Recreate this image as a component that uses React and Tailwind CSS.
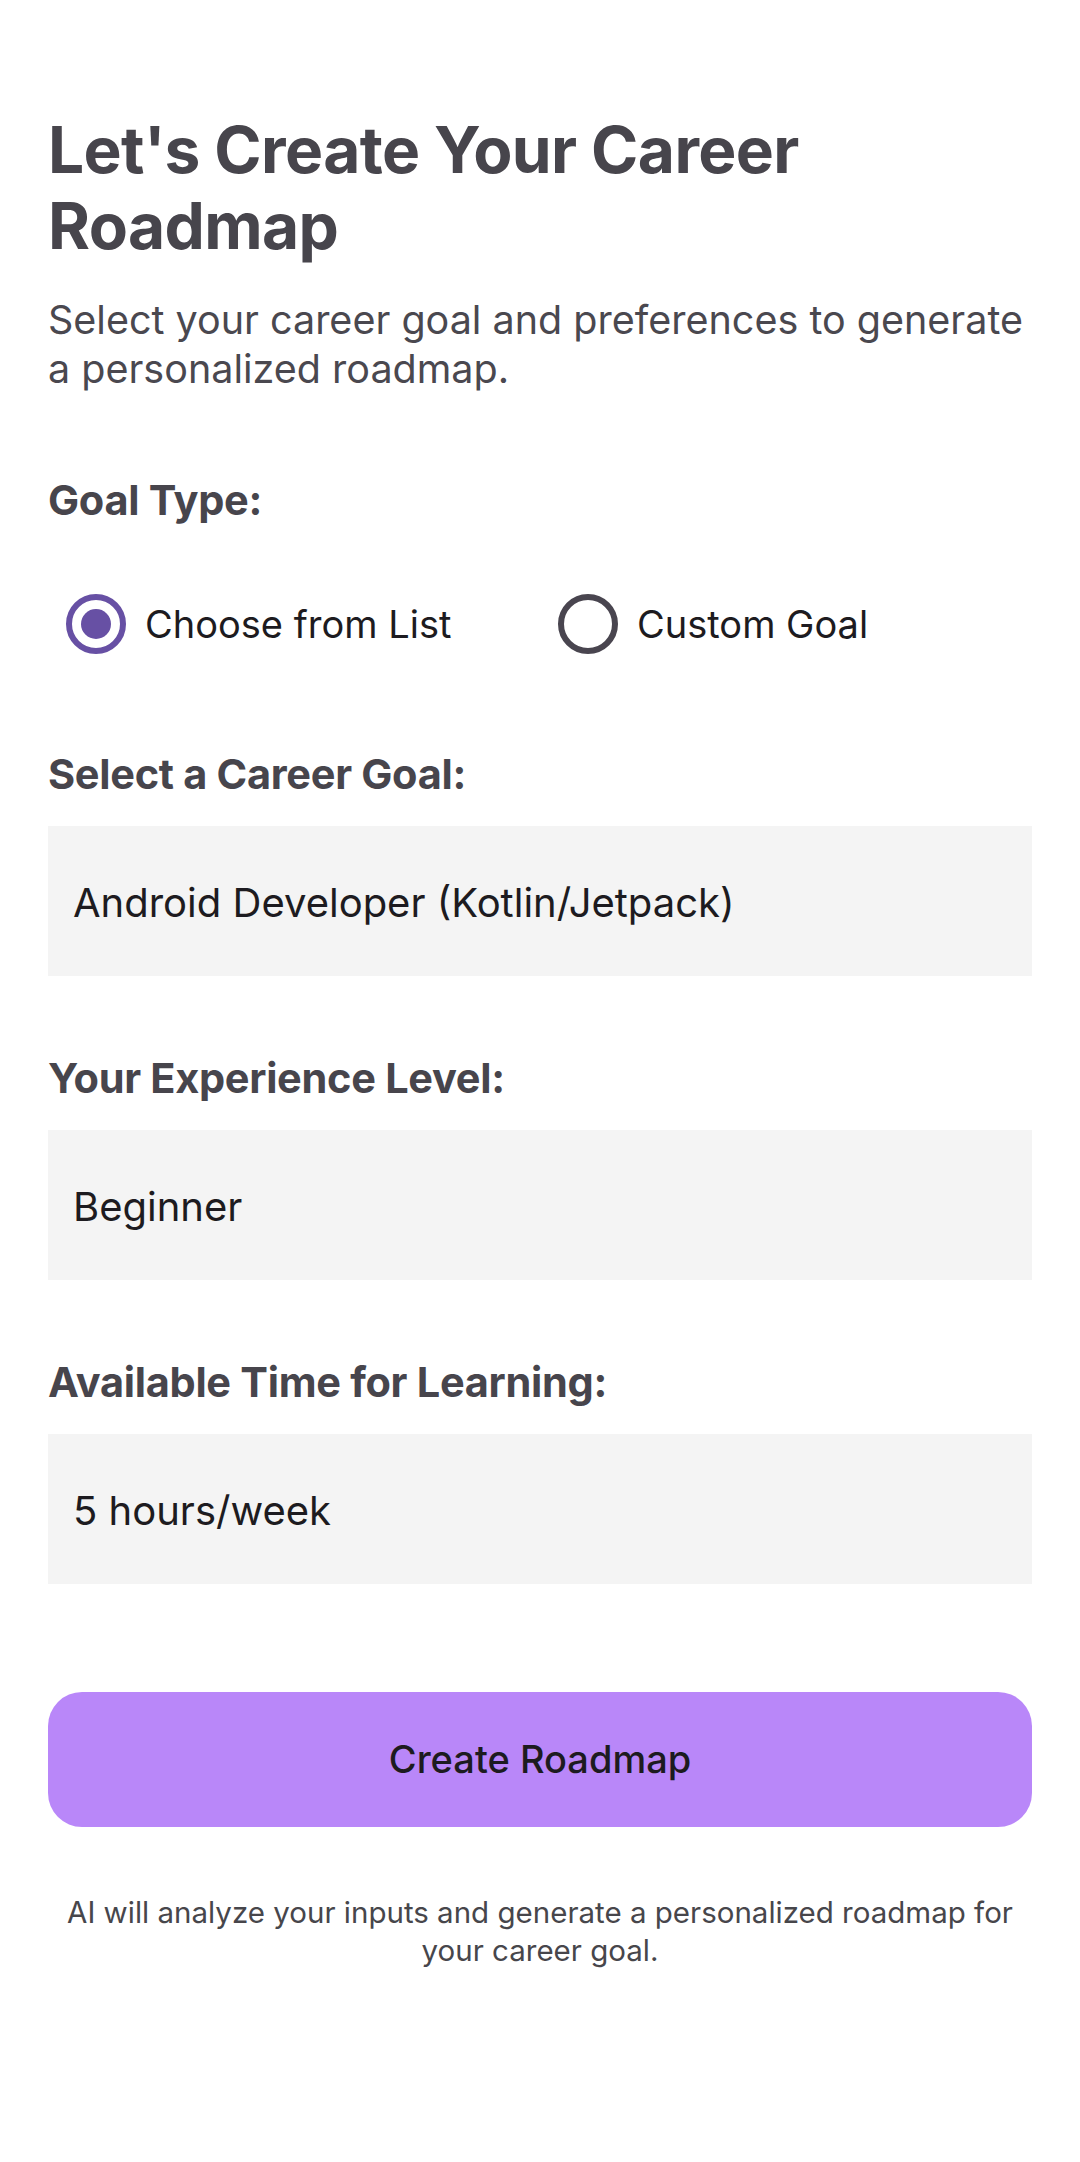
import React, { useState } from 'react';

const fields = [
  { label: 'Select a Career Goal:', value: 'Android Developer (Kotlin/Jetpack)' },
  { label: 'Your Experience Level:', value: 'Beginner' },
  { label: 'Available Time for Learning:', value: '5 hours/week' },
];

function Radio({ checked, label, onClick }) {
  return (
    <button onClick={onClick} className="flex-1 flex items-center gap-[19px] pl-[18px] text-left">
      <span
        className={`w-[60px] h-[60px] rounded-full border-[6px] flex items-center justify-center shrink-0 ${checked ? 'border-[#6750a4]' : 'border-[#49454f]'}`}
      >
        {checked && <span className="w-[30px] h-[30px] rounded-full bg-[#6750a4]" />}
      </span>
      <span className="text-[38px] leading-[48px] text-[#1d1b20]">{label}</span>
    </button>
  );
}

export default function App() {
  const [goalType, setGoalType] = useState('list');

  return (
    <div className="min-h-[2162px] bg-white px-[48px] pt-[112px] font-['Inter','Liberation_Sans',sans-serif]">
      {/* Header */}
      <h1 className="text-[64px] leading-[76px] font-bold text-[#47454c] tracking-[-0.6px]">
        Let's Create Your Career Roadmap
      </h1>
      <p className="mt-[32px] text-[39.5px] leading-[49px] text-[#4a484f]">
        Select your career goal and preferences to generate a personalized roadmap.
      </p>

      {/* Goal type */}
      <h2 className="mt-[82px] text-[41.5px] leading-[48px] font-bold text-[#47454c] tracking-[-0.3px]">Goal Type:</h2>
      <div className="mt-[70px] flex">
        <Radio checked={goalType === 'list'} label="Choose from List" onClick={() => setGoalType('list')} />
        <Radio checked={goalType === 'custom'} label="Custom Goal" onClick={() => setGoalType('custom')} />
      </div>

      {/* Fields */}
      <div className="mt-[96px] flex flex-col gap-[78px]">
        {fields.map(f => (
          <div key={f.label}>
            <h2 className="text-[41.5px] leading-[48px] font-bold text-[#47454c] tracking-[-0.3px]">{f.label}</h2>
            <div className="mt-[28px] h-[150px] bg-[#f4f4f4] flex items-center px-[25px]">
              <span className="text-[40px] text-[#1d1b20] translate-y-[2px]">{f.value}</span>
            </div>
          </div>
        ))}
      </div>

      <button className="mt-[108px] w-full h-[135px] rounded-[34px] bg-[#b987f9] text-[38px] font-medium text-[#1d1b20]">
        Create Roadmap
      </button>

      <p className="mt-[66px] text-center text-[29.5px] leading-[38px] text-[#47464b]">
        AI will analyze your inputs and generate a personalized roadmap for your career goal.
      </p>
    </div>
  );
}
